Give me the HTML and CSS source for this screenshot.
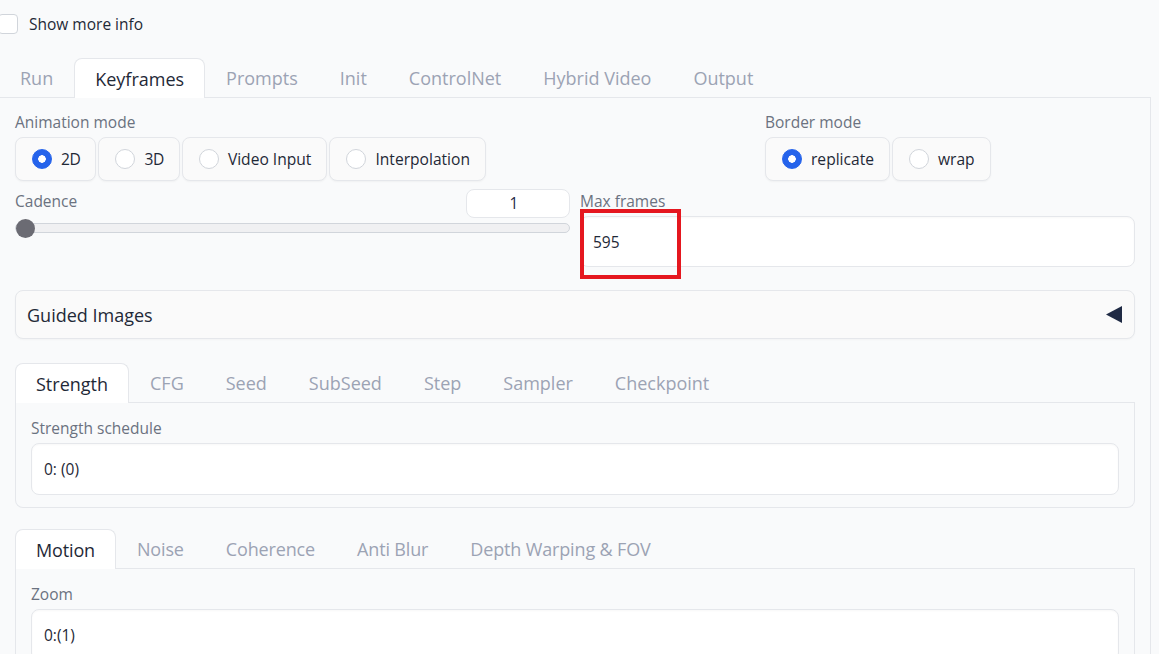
FILE: index.html
```html
<!DOCTYPE html>
<html>
<head>
<meta charset="utf-8">
<title>Deforum Keyframes</title>
<link rel="stylesheet" href="styles.css">
</head>
<body>
<div class="app">
  <label class="check-row"><span class="checkbox"></span><span>Show more info</span></label>

  <div class="main-tabs">
    <div class="tab-nav">
      <button class="tab">Run</button>
      <button class="tab selected">Keyframes</button>
      <button class="tab">Prompts</button>
      <button class="tab">Init</button>
      <button class="tab">ControlNet</button>
      <button class="tab">Hybrid Video</button>
      <button class="tab">Output</button>
    </div>

    <div class="main-panel">
      <div class="row-top">
        <div class="field">
          <span class="label">Animation mode</span>
          <div class="radio-group">
            <label class="radio checked"><span class="dot"></span><span class="digits">2D</span></label>
            <label class="radio"><span class="dot"></span><span class="digits">3D</span></label>
            <label class="radio"><span class="dot"></span>Video Input</label>
            <label class="radio"><span class="dot"></span>Interpolation</label>
          </div>
        </div>
        <div class="field">
          <span class="label">Border mode</span>
          <div class="radio-group">
            <label class="radio checked"><span class="dot"></span>replicate</label>
            <label class="radio"><span class="dot"></span>wrap</label>
          </div>
        </div>
      </div>

      <div class="row-half">
        <div class="slider-field">
          <div class="slider-head">
            <span class="label">Cadence</span>
            <div class="num">1</div>
          </div>
          <div class="track"><span class="thumb"></span></div>
        </div>
        <div class="field maxframes">
          <span class="label">Max frames</span>
          <div class="input">595</div>
          <div class="highlight"></div>
        </div>
      </div>

      <div class="accordion">
        <span>Guided Images</span>
        <svg class="acc-icon" width="16" height="17" viewBox="0 0 16 17"><polygon points="16,0 0,8.5 16,17" fill="#1f2a44"/></svg>
      </div>

      <div class="sub-tabs strength-tabs">
        <div class="sub-nav">
          <button class="tab selected">Strength</button>
          <button class="tab">CFG</button>
          <button class="tab">Seed</button>
          <button class="tab">SubSeed</button>
          <button class="tab">Step</button>
          <button class="tab">Sampler</button>
          <button class="tab">Checkpoint</button>
        </div>
        <div class="sub-panel">
          <span class="label">Strength schedule</span>
          <div class="input">0: (0)</div>
        </div>
      </div>

      <div class="sub-tabs motion-tabs">
        <div class="sub-nav motion-nav">
          <button class="tab selected">Motion</button>
          <button class="tab">Noise</button>
          <button class="tab">Coherence</button>
          <button class="tab">Anti Blur</button>
          <button class="tab">Depth Warping &amp; FOV</button>
        </div>
        <div class="sub-panel">
          <span class="label">Zoom</span>
          <div class="input">0:(1)</div>
        </div>
      </div>
    </div>
  </div>
</div>
</body>
</html>
```
FILE: styles.css
```css
* { box-sizing: border-box; }
html, body { margin: 0; padding: 0; }
body {
  background: #f9fafb;
  font-family: "Open Sans", "Noto Sans", sans-serif;
  color: #1f2937;
  height: 654px;
  overflow: hidden;
}
.app {
  margin-left: -1px;
  width: 1152px;
  padding-top: 13px;
}
.check-row {
  display: flex;
  align-items: center;
  gap: 11px;
  height: 21px;
  font-size: 15.5px;
  color: #1f2937;
}
.checkbox {
  width: 20px;
  height: 20px;
  margin-left: -1px;
  border: 1px solid #d1d5db;
  border-radius: 4px;
  background: #fff;
}
.main-tabs { margin-top: 24px; }
.tab-nav, .sub-nav {
  display: flex;
  border-bottom: 1px solid #e5e7eb;
}
.tab {
  height: 39px;
  padding: 0 20px;
  font-family: inherit;
  font-size: 18px;
  color: #9ca3b4;
  background: none;
  border: 1px solid transparent;
  border-bottom: none;
  border-radius: 8px 8px 0 0;
  display: flex;
  align-items: center;
  white-space: nowrap;
}
.motion-nav .tab { letter-spacing: -0.15px; }
.tab.selected {
  height: 40px;
  margin-bottom: -1px;
  background: #fff;
  border-color: #e5e7eb;
  color: #1f2937;
}
.main-panel {
  border-right: 1px solid #e5e7eb;
  padding: 13px 15px 0 16px;
  height: 560px;
}
.row-top {
  display: grid;
  grid-template-columns: 2fr 1fr;
  gap: 10px;
}
.label {
  display: block;
  font-size: 15.5px;
  line-height: 22px;
  color: #6b7280;
  margin-bottom: 4px;
}
.radio-group {
  display: flex;
  gap: 2px;
}
.radio {
  height: 44px;
  padding: 0 15px 0 16px;
  display: flex;
  align-items: center;
  gap: 9px;
  border: 1px solid #e5e7eb;
  border-radius: 8px;
  background: #fafafa;
  font-size: 15.6px;
  color: #1f2937;
  box-shadow: 0 1px 2px rgba(0, 0, 0, 0.04);
  white-space: nowrap;
}
.digits { letter-spacing: -0.4px; }
.dot {
  width: 20px;
  height: 20px;
  border-radius: 50%;
  border: 1px solid #d1d5db;
  background: #fff;
}
.radio.checked .dot {
  border-color: #2563eb;
  background: radial-gradient(circle, #fff 0 3.5px, #2563eb 4px);
}
.row-half {
  display: grid;
  grid-template-columns: 1fr 1fr;
  gap: 10px;
  margin-top: 8px;
}
.slider-head {
  display: flex;
  justify-content: space-between;
  align-items: flex-start;
  height: 29px;
}
.slider-head .label { padding-top: 1px; margin: 0; }
.num {
  width: 104px;
  height: 29px;
  border: 1px solid #e5e7eb;
  border-radius: 8px;
  background: #fff;
  text-align: center;
  line-height: 27px;
  font-size: 15.5px;
  color: #1f2a44;
  padding-right: 8px;
}
.track {
  position: relative;
  height: 10px;
  margin-top: 5px;
  border: 1px solid #d1d5db;
  border-radius: 5px;
  background: #f0f0f2;
}
.thumb {
  position: absolute;
  left: 0;
  top: -5.5px;
  width: 19px;
  height: 19px;
  border-radius: 50%;
  background: #6b6b73;
}
.maxframes { position: relative; padding-top: 1px; }
.input {
  height: 52px;
  background: #fff;
  border: 1px solid #e5e7eb;
  border-radius: 8px;
  padding: 0 12px;
  display: flex;
  align-items: center;
  font-size: 15.5px;
  color: #1f2937;
  box-shadow: inset 0 1px 2px rgba(0, 0, 0, 0.03);
}
.maxframes .input { height: 51px; }
.highlight {
  position: absolute;
  left: 0;
  top: 20px;
  width: 101px;
  height: 70px;
  border: 4px solid #e5171f;
}
.accordion {
  margin-top: 23px;
  height: 49px;
  border: 1px solid #e5e7eb;
  border-radius: 8px;
  background: #fafafa;
  padding: 0 12px 0 11px;
  display: flex;
  align-items: center;
  justify-content: space-between;
  font-size: 18px;
  color: #1f2937;
  box-shadow: 0 1px 2px rgba(0, 0, 0, 0.03);
}
.strength-tabs { margin-top: 24px; }
.motion-tabs { margin-top: 21px; }
.sub-panel {
  border: 1px solid #e5e7eb;
  border-top: none;
  border-radius: 0 0 8px 8px;
  padding: 14px 15px 12px 15px;
}
```
